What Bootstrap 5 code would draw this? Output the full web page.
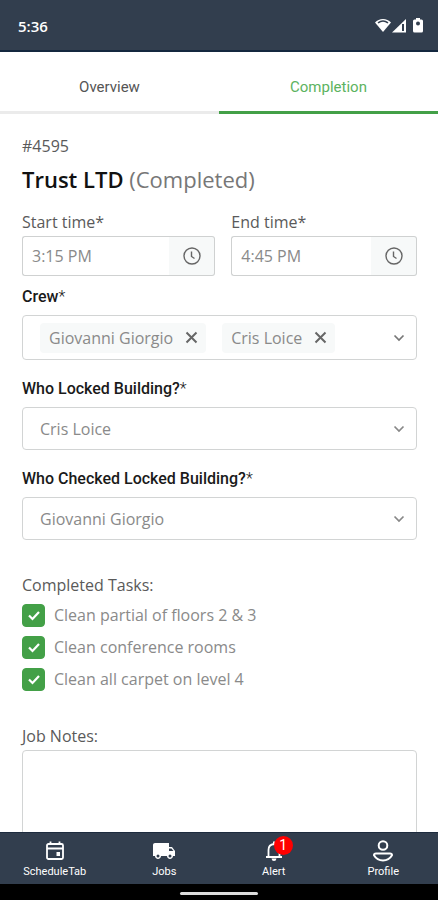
<!DOCTYPE html>
<html lang="en">
<head>
<meta charset="utf-8">
<meta name="viewport" content="width=device-width, initial-scale=1">
<title>Job completion</title>
<link href="https://cdn.jsdelivr.net/npm/bootstrap@5.3.0/dist/css/bootstrap.min.css" rel="stylesheet">
<style>
  :root { --navy: #323e4e; --green: #43a047; --line: #d2d4d4; --soft: #f7f9f9; --grey: #8a8a8a; }
  body { font-family: "Open Sans", sans-serif; font-size: 16px; line-height: 24px; font-weight: 400; color: #5a5a5a; background: #fff; }
  .status-bar { background: var(--navy); height: 52px; padding: 2px 15px 0 18px; border-bottom: 2px solid #14283f; font: 600 15px "Open Sans", sans-serif; }
  .tab-link { font: 400 15px/20px Roboto, sans-serif; color: #555; text-decoration: none; padding: 25px 0 14px; border-bottom: 3px solid #ebebeb; }
  .tab-link.active { color: #5cb360; border-color: var(--green); }
  .job-body { padding: 20px 21px 0 22px; min-height: 0; }
  .job-title { font-size: 22px; line-height: 30px; font-weight: 600; color: #111; margin: 6px 0 16px; }
  .job-title span { font-weight: 400; color: #777; }
  .field-label { display: block; margin-bottom: 2px; }
  .start-field { flex: 51 1 0; min-width: 0; }
  .end-field { flex: 49 1 0; min-width: 0; }
  .strong-label { display: block; font: 500 16px/24px Roboto, sans-serif; color: #1a1a1a; padding-top: 1px; margin-bottom: 6px; }
  .strong-label span { font-weight: 300; }
  .time-group .form-control { height: 40px; padding: 0 9px; color: var(--grey); border-color: #cfd1d1; border-right-color: #eceeee; border-radius: 3px; }
  .time-group .btn { width: 46px; padding: 0; background: var(--soft); border: 1px solid #cfd1d1; border-left: 0; border-radius: 3px; color: #666; }
  .time-group svg { display: block; margin: 0 auto; }
  .select-box { border: 1px solid var(--line); border-radius: 4px; background-color: #fff; }
  .crew-box { height: 45px; padding: 0 10px 0 17px; }
  .chip { background: var(--soft); border-radius: 4px; height: 30px; padding: 0 8px 0 9px; color: var(--grey); white-space: nowrap; }
  .bare-btn { border: 0; background: none; padding: 0; line-height: 0; color: #666; }
  .person-select { height: 43px; padding: 0 40px 0 17px; color: var(--grey); background-position: right 10px center; background-size: 14px 14px;
    background-image: url("data:image/svg+xml,%3Csvg xmlns='http://www.w3.org/2000/svg' viewBox='0 0 14 14'%3E%3Cpath d='M2.500 4.500 7 9l4.500-4.500' fill='none' stroke='%23888' stroke-width='1.700'/%3E%3C/svg%3E"); }
  .section-gap { margin-top: 33px; }
  .tasks-title { margin-bottom: 6px; font-size: 16px; line-height: 24px; }
  .task { min-height: 24px; padding: 0; margin: 0; gap: 9px; color: var(--grey); }
  .task .form-check-input { float: none; width: 23px; height: 23px; margin: 0; border-radius: 4px; flex-shrink: 0; }
  .task .form-check-input:checked { background-color: var(--green); border-color: var(--green); background-size: 20px 20px;
    background-image: url("data:image/svg+xml,%3Csvg xmlns='http://www.w3.org/2000/svg' viewBox='0 0 20 20'%3E%3Cpath d='m5 10.500 3.500 3.500 6.500-7' fill='none' stroke='%23fff' stroke-width='2.200'/%3E%3C/svg%3E"); }
  textarea.notes { min-height: 140px; border: 1px solid var(--line); border-radius: 4px; resize: none; }
  .tab-bar { background: var(--navy); height: 52px; border-top: 1px solid #1d2b3e; }
  .tab-bar a { color: #fff; text-decoration: none; font: 400 11px/14px Roboto, sans-serif; padding-top: 6px; gap: 2px; }
  .count { top: -3px; left: 12px; width: 19px; height: 19px; background: #f00; font: 400 14px/19px Roboto, sans-serif; }
  .home-strip { height: 16px; background: #000; }
  .home-strip span { width: 78px; height: 3px; background: #ddd; border-radius: 2px; }
</style>
<script src="https://cdn.jsdelivr.net/npm/bootstrap@5.3.0/dist/js/bootstrap.bundle.min.js"></script>
</head>
<body>
<div class="vh-100 d-flex flex-column overflow-hidden">
  <header class="status-bar text-white d-flex align-items-center justify-content-between flex-shrink-0">
    <span>5:36</span>
    <svg width="48" height="16" viewBox="0 0 48 16" fill="#fff" aria-hidden="true">
      <path d="M0 4.500C4-.2 12-.2 16 4.500L8 14z"/><path d="M3 4.800q5-3.600 10 0" fill="none" stroke="#323e4e" stroke-width="1.500"/>
      <path d="M31 1v13.500H17z"/><path d="M28 6v7" stroke="#323e4e" stroke-width="2"/>
      <path d="M41 0h4v1.500h1.500q1.500 0 1.500 1.500v10q0 1.500-1.500 1.500h-7q-1.500 0-1.500-1.500V3q0-1.500 1.500-1.500H41z"/><circle cx="43" cy="5.500" r="2" fill="#323e4e"/>
    </svg>
  </header>
  <nav class="d-flex flex-shrink-0 text-center" aria-label="Job views">
    <a class="tab-link w-50" href="#overview">Overview</a>
    <a class="tab-link w-50 active" href="#completion" aria-current="page">Completion</a>
  </nav>
  <main class="job-body flex-grow-1 overflow-hidden">
    <div>#4595</div>
    <h1 class="job-title">Trust LTD <span>(Completed)</span></h1>
    <div class="d-flex gap-3 mb-2">
      <div class="start-field">
        <label class="field-label" for="start">Start time*</label>
        <div class="input-group time-group">
          <input class="form-control" id="start" type="text" value="3:15 PM">
          <button class="btn" type="button" aria-label="Pick start time"><svg width="18" height="18" viewBox="0 0 18 18" fill="none" stroke="currentColor" stroke-width="1.400"><circle cx="9" cy="9" r="8"/><path d="M8.500 4.500v5l3 2"/></svg></button>
        </div>
      </div>
      <div class="end-field">
        <label class="field-label" for="end">End time*</label>
        <div class="input-group time-group">
          <input class="form-control" id="end" type="text" value="4:45 PM">
          <button class="btn" type="button" aria-label="Pick end time"><svg width="18" height="18" viewBox="0 0 18 18" fill="none" stroke="currentColor" stroke-width="1.400"><circle cx="9" cy="9" r="8"/><path d="M8.500 4.500v5l3 2"/></svg></button>
        </div>
      </div>
    </div>
    <div class="strong-label" id="crew-label">Crew<span>*</span></div>
    <div class="select-box crew-box d-flex align-items-center gap-3 mb-3" role="group" aria-labelledby="crew-label">
      <span class="chip d-flex align-items-center gap-2">Giovanni Giorgio <button class="bare-btn ms-1" type="button" aria-label="Remove Giovanni Giorgio"><svg width="13" height="13" viewBox="0 0 13 13" fill="none" stroke="currentColor" stroke-width="2"><path d="m1.500 1.500 10 10m0-10-10 10"/></svg></button></span>
      <span class="chip d-flex align-items-center gap-2">Cris Loice <button class="bare-btn ms-1" type="button" aria-label="Remove Cris Loice"><svg width="13" height="13" viewBox="0 0 13 13" fill="none" stroke="currentColor" stroke-width="2"><path d="m1.500 1.500 10 10m0-10-10 10"/></svg></button></span>
      <button class="bare-btn ms-auto" type="button" aria-label="Choose crew"><svg width="14" height="14" viewBox="0 0 14 14" fill="none" stroke="#777" stroke-width="1.700"><path d="M2.500 4.500 7 9l4.500-4.500"/></svg></button>
    </div>
    <label class="strong-label" for="locked">Who Locked Building?<span>*</span></label>
    <select class="form-select select-box person-select mb-3" id="locked"><option>Cris Loice</option><option>Giovanni Giorgio</option></select>
    <label class="strong-label" for="checked">Who Checked Locked Building?<span>*</span></label>
    <select class="form-select select-box person-select" id="checked"><option>Giovanni Giorgio</option><option>Cris Loice</option></select>
    <fieldset class="section-gap d-flex flex-column">
      <legend class="tasks-title">Completed Tasks:</legend>
      <div class="d-flex flex-column gap-2">
        <div class="form-check task d-flex align-items-center"><input class="form-check-input" type="checkbox" id="t1" checked><label for="t1">Clean partial of floors 2 &amp; 3</label></div>
        <div class="form-check task d-flex align-items-center"><input class="form-check-input" type="checkbox" id="t2" checked><label for="t2">Clean conference rooms</label></div>
        <div class="form-check task d-flex align-items-center"><input class="form-check-input" type="checkbox" id="t3" checked><label for="t3">Clean all carpet on level 4</label></div>
      </div>
    </fieldset>
    <label class="field-label section-gap" for="notes">Job Notes:</label>
    <textarea class="form-control notes" id="notes"></textarea>
  </main>
  <nav class="tab-bar d-flex flex-shrink-0" aria-label="Main">
    <a class="w-25 d-flex flex-column align-items-center" href="#schedule">
      <svg width="24" height="24" viewBox="0 0 24 24" fill="none" stroke="#fff" stroke-width="1.800" aria-hidden="true"><rect x="4" y="5" width="16" height="15" rx="1.500"/><path d="M4 9.500h16M7.500 2.500V5m9-2.500V5"/><path d="M13.500 13h3.500v4h-3.500z" fill="#fff" stroke="none"/></svg>
      <span>ScheduleTab</span></a>
    <a class="w-25 d-flex flex-column align-items-center" href="#jobs">
      <svg width="24" height="24" viewBox="0 0 24 24" fill="#fff" aria-hidden="true"><path d="M20 8h-3V4H3c-1.100 0-2 .9-2 2v11h2c0 1.660 1.340 3 3 3s3-1.340 3-3h6c0 1.660 1.340 3 3 3s3-1.340 3-3h2v-5l-3-4zM6 18.500a1.500 1.500 0 1 1 0-3 1.500 1.500 0 0 1 0 3zm13.500-9 1.960 2.500H17V9.500h2.500zM18 18.500a1.500 1.500 0 1 1 0-3 1.500 1.500 0 0 1 0 3z"/></svg>
      <span>Jobs</span></a>
    <a class="w-25 d-flex flex-column align-items-center" href="#alert">
      <span class="position-relative lh-1"><svg class="d-block" width="24" height="24" viewBox="0 0 24 24" fill="none" stroke="#fff" stroke-width="1.800" aria-hidden="true"><path d="M6.500 17V11q0-5.500 5.500-6 5.500.5 5.500 6v6M4 18h16"/><path d="M9.500 19.500h5q-.3 2.500-2.500 2.500t-2.500-2.500zM11 2.500h2v2h-2z" fill="#fff" stroke="none"/></svg><span class="count position-absolute rounded-circle text-center">1</span></span>
      <span>Alert</span></a>
    <a class="w-25 d-flex flex-column align-items-center" href="#profile">
      <svg width="24" height="24" viewBox="0 0 24 24" fill="none" stroke="#fff" stroke-width="2" aria-hidden="true"><circle cx="12" cy="6.500" r="4.300"/><path d="M5 14.500h14q2.200 0 2 1.800Q18 21.500 12 21.500T3 16.300q-.2-1.800 2-1.800z"/></svg>
      <span>Profile</span></a>
  </nav>
  <footer class="home-strip d-flex justify-content-center flex-shrink-0 pt-2"><span></span></footer>
</div>
</body>
</html>
